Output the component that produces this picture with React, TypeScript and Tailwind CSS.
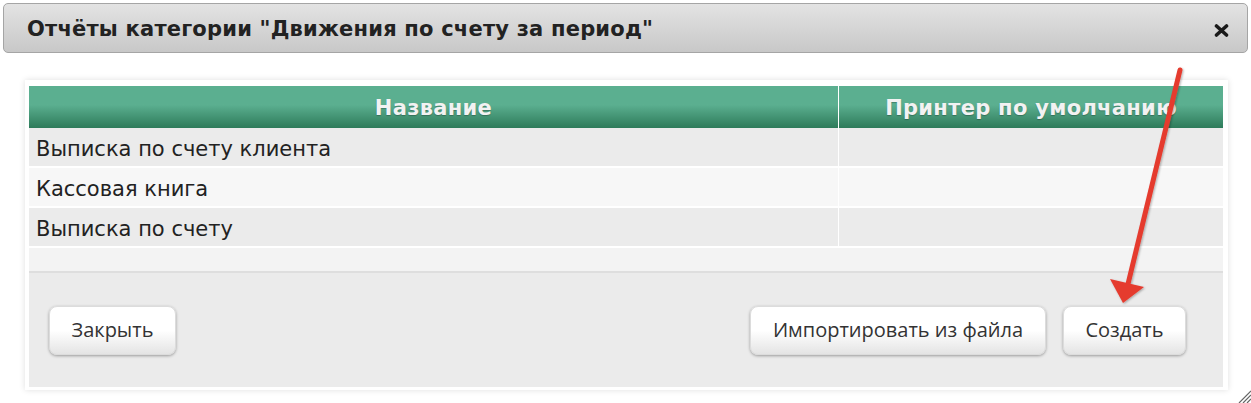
import React from "react";

const rows = ["Выписка по счету клиента", "Кассовая книга", "Выписка по счету"];

function Btn({ label, w }: { label: string; w: string }) {
  return (
    <button
      className={`${w} h-[49px] rounded-[8px] border border-[#dcdcdc] bg-gradient-to-b from-white from-50% to-[#e4e4e4] text-[20px] text-[#333] shadow-[0_1px_3px_rgba(0,0,0,0.35)] flex items-center justify-center`}
      style={{ fontFamily: '"Open Sans", sans-serif' }}
    >
      {label}
    </button>
  );
}

export default function App() {
  return (
    <div
      className="relative w-[1251px] h-[403px] overflow-hidden bg-white text-[#222]"
      style={{ fontFamily: '"DejaVu Sans", Verdana, sans-serif' }}
    >
      {/* title bar */}
      <div className="mx-[3px] mt-[3px] h-[50px] rounded-[5px] border border-[#a5a5a5] bg-gradient-to-b from-[#e3e3e3] to-[#c8c8c8] flex items-center justify-between pl-[23px] pr-[18px] pt-[4px]">
        <span className="text-[21px] font-bold text-[#222] tracking-[0.2px]">
          Отчёты категории "Движения по счету за период"
        </span>
        <svg width="15" height="13" viewBox="0 0 15 13">
          <path d="M2.5 2 L12.5 11 M12.5 2 L2.5 11" stroke="#1a1a1a" strokeWidth="3.6" strokeLinecap="round" />
        </svg>
      </div>

      {/* panel */}
      <div className="ml-[25px] mt-[27px] w-[1203px] pl-[4px] pr-[5px] pt-[6px] pb-[3px] bg-white shadow-[0_0_6px_rgba(0,0,0,0.13)]">
        <div className="grid grid-cols-[810px_1fr] h-[42px] bg-gradient-to-b from-[#5baf90] from-45% to-[#2d7b5a] text-[#f2f2f2] text-[21px] font-bold tracking-[0.3px] [text-shadow:0_1px_1px_rgba(0,0,0,0.25)]">
          <div className="flex items-center justify-center pt-[4px] border-r border-white">Название</div>
          <div className="flex items-center justify-center pt-[4px]">Принтер по умолчанию</div>
        </div>
        {rows.map((r, i) => (
          <div
            key={r}
            className={`grid grid-cols-[810px_1fr] h-[40px] border-b-2 border-white text-[21px] ${
              i % 2 === 0 ? "bg-[#ebebeb]" : "bg-[#f7f7f7]"
            }`}
          >
            <div className="flex items-center pl-[7px] pt-[5px] border-r border-white">{r}</div>
            <div />
          </div>
        ))}
        <div className="h-[23px] bg-[#f3f3f3]" />
        <div className="h-[116px] border-t-2 border-[#dedede] bg-[#ebebeb] flex items-center justify-between pl-[20px] pr-[37px]">
          <Btn label="Закрыть" w="w-[127px]" />
          <div className="flex gap-[17px]">
            <Btn label="Импортировать из файла" w="w-[296px]" />
            <Btn label="Создать" w="w-[123px]" />
          </div>
        </div>
      </div>

      {/* red annotation arrow */}
      <svg className="absolute left-0 top-0 pointer-events-none" width="1251" height="403">
        <defs>
          <filter id="sh" x="-20%" y="-20%" width="140%" height="140%">
            <feDropShadow dx="1" dy="1" stdDeviation="1" floodColor="#000" floodOpacity="0.3" />
          </filter>
        </defs>
        <g filter="url(#sh)">
          <line x1="1180" y1="70" x2="1128" y2="284" stroke="#e53b2f" strokeWidth="5" strokeLinecap="round" />
          <polygon points="1123,303 1110,279 1144,287" fill="#e53b2f" />
        </g>
      </svg>

      {/* resize grip */}
      <svg className="absolute right-0 bottom-0" width="16" height="16" viewBox="0 0 16 16">
        <path d="M4 16 L16 4 M8 16 L16 8 M12 16 L16 12" stroke="#666" strokeWidth="1.2" />
      </svg>
    </div>
  );
}
